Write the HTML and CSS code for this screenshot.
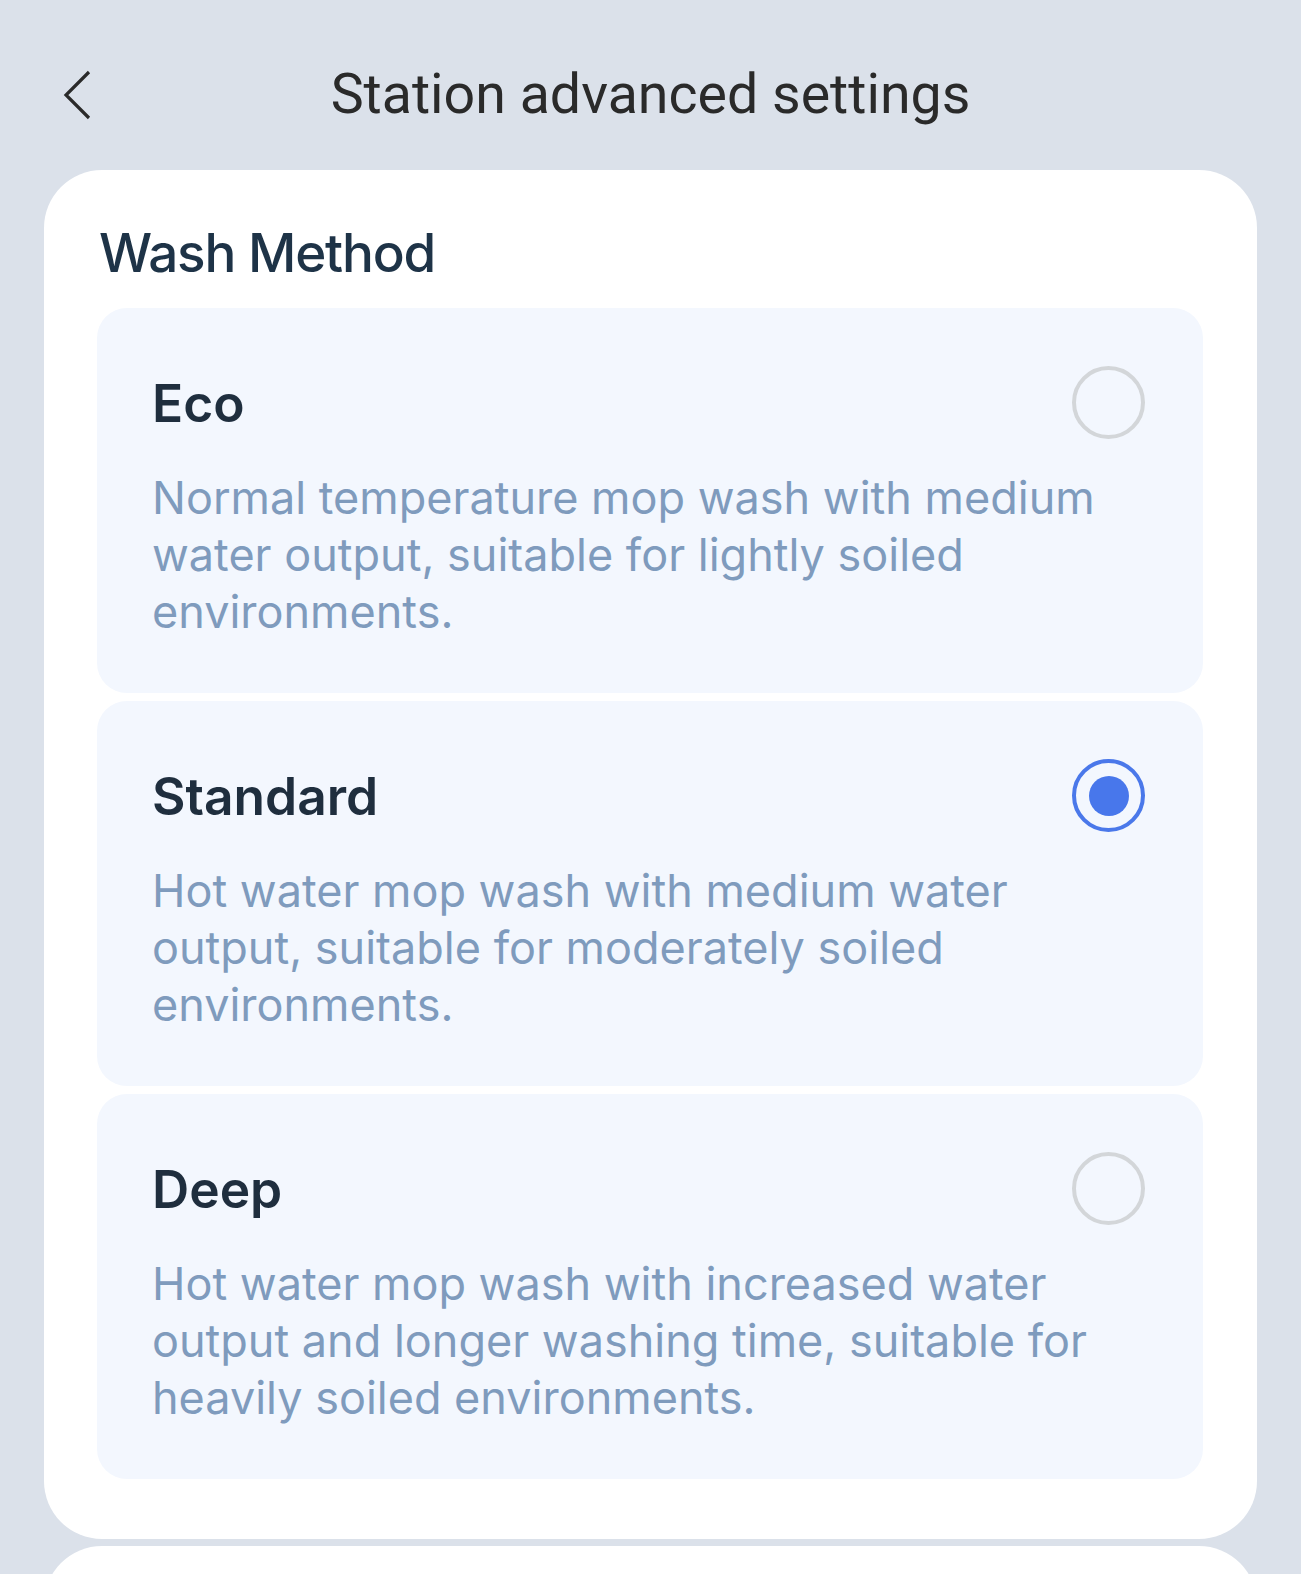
FILE: index.html
```html
<!DOCTYPE html>
<html lang="en">
<head>
<meta charset="utf-8">
<title>Station advanced settings</title>
<link rel="stylesheet" href="styles.css">
</head>
<body>
<div class="page">
  <header class="topbar">
    <div class="back">
      <svg class="back-icon" viewBox="0 0 30 50" width="30" height="50" aria-hidden="true">
        <path d="M27 2 L4 25 L27 48" fill="none" stroke="#2a2a2a" stroke-width="3.2" stroke-linecap="butt" stroke-linejoin="miter"/>
      </svg>
    </div>
    <h1 class="page-title">Station advanced settings</h1>
    <div class="spacer"></div>
  </header>

  <section class="card">
    <h2 class="section-title">Wash Method</h2>
    <div class="options">
      <div class="option">
        <div class="option-head">
          <span class="option-name">Eco</span>
          <span class="radio"></span>
        </div>
        <p class="option-desc">Normal temperature mop wash with medium water output, suitable for lightly soiled environments.</p>
      </div>
      <div class="option">
        <div class="option-head">
          <span class="option-name">Standard</span>
          <span class="radio radio-on"><span class="radio-dot"></span></span>
        </div>
        <p class="option-desc">Hot water mop wash with medium water output, suitable for moderately soiled environments.</p>
      </div>
      <div class="option">
        <div class="option-head">
          <span class="option-name">Deep</span>
          <span class="radio"></span>
        </div>
        <p class="option-desc">Hot water mop wash with increased water output and longer washing time, suitable for heavily soiled environments.</p>
      </div>
    </div>
  </section>

  <section class="card card-next"></section>
</div>
</body>
</html>
```

FILE: styles.css
```css
html, body {
  margin: 0;
  padding: 0;
}
body {
  background: #dbe1ea;
  font-family: "Inter", "Noto Sans", "Liberation Sans", sans-serif;
  overflow: hidden;
}
.page {
  display: flex;
  flex-direction: column;
  padding: 0 44px;
}
.topbar {
  display: grid;
  grid-template-columns: 1fr auto 1fr;
  align-items: center;
  height: 110px;
  margin-top: 40px;
  margin-bottom: 20px;
}
.back {
  display: flex;
  align-items: center;
  padding-left: 18px;
}
.back-icon {
  display: block;
}
.page-title {
  margin: 0;
  font-family: "Roboto", "Liberation Sans", sans-serif;
  font-weight: 400;
  font-size: 55.5px;
  line-height: 1;
  color: #2a2a2a;
  letter-spacing: 0;
}
.card {
  background: #ffffff;
  border-radius: 58px;
  padding: 50px 54px 60px 53px;
}
.section-title {
  margin: 0 0 22px 2px;
  font-size: 53px;
  line-height: 66px;
  font-weight: 500;
  letter-spacing: -1.2px;
  color: #1e3347;
}
.options {
  display: flex;
  flex-direction: column;
  gap: 8px;
}
.option {
  background: #f3f7fe;
  border-radius: 30px;
  padding: 58px 58px 53px 55px;
}
.option-head {
  display: flex;
  align-items: center;
  justify-content: space-between;
  height: 73px;
}
.option-name {
  font-size: 51.5px;
  font-weight: 600;
  color: #1f2e3e;
}
.radio {
  box-sizing: border-box;
  width: 73px;
  height: 73px;
  border-radius: 50%;
  border: 4px solid #d3d6d9;
  display: flex;
  align-items: center;
  justify-content: center;
}
.radio-on {
  border-color: #4a78ea;
}
.radio-dot {
  width: 40px;
  height: 40px;
  border-radius: 50%;
  background: #4877eb;
}
.option-desc {
  margin: 30px 0 0 0;
  font-size: 45px;
  line-height: 57px;
  color: #7f9bbd;
  font-weight: 400;
}
.card-next {
  margin-top: 7px;
  height: 200px;
  padding: 0;
}
```
